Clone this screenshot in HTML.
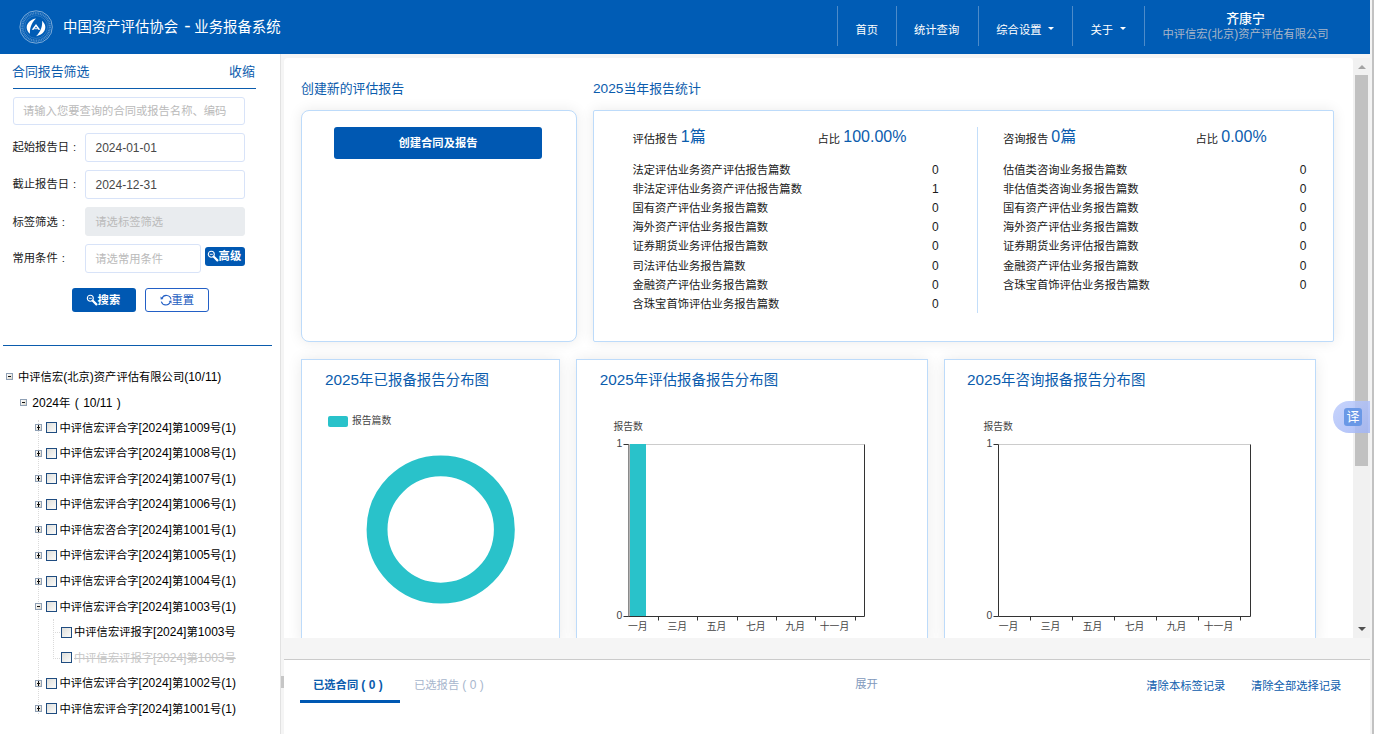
<!DOCTYPE html>
<html lang="zh-CN">
<head>
<meta charset="utf-8">
<title>中国资产评估协会 - 业务报备系统</title>
<style>
*{box-sizing:border-box;margin:0;padding:0}
html,body{width:1374px;height:734px;overflow:hidden;background:#f5f5f5}
body{position:relative;font-family:"Liberation Sans","Noto Sans CJK SC",sans-serif;font-size:11.3px;color:#111;line-height:1}
.a{position:absolute;white-space:nowrap}
.t{position:absolute;white-space:nowrap;height:20px;line-height:20px}
.l{font-size:1.062em}
.inp{border:1px solid #d8e3f8;border-radius:3px;background:#fff}
.cb{width:11px;height:11px;border:1px solid #1f4c80;background:linear-gradient(135deg,#dededa,#f6f6f4 80%)}
.pm{width:7px;height:7px;border:1px solid #8fa0b5;background:linear-gradient(135deg,#fff,#dcd8cc)}
.pm:before{content:"";position:absolute;left:1px;top:2px;width:3px;height:1px;background:#111}
.pm.p:after{content:"";position:absolute;left:2px;top:0;width:1px;height:5px;background:#111}
.card{border:1px solid #bddbfa;background:#fff;box-shadow:0 0 14px rgba(0,0,0,.085)}
</style>
</head>
<body>

<div class="a" style="left:0px;top:0px;width:1370px;height:54px;background:#005cb5"></div>
<div class="a" style="left:1370px;top:0px;width:2px;height:734px;background:#f4f4f4"></div>
<div class="a" style="left:1372px;top:0px;width:2px;height:734px;background:#c2c2c2"></div>
<svg class="a" style="left:18.5px;top:9.5px" width="34" height="34" viewBox="0 0 34 34">
  <circle cx="17.1" cy="17" r="16.2" fill="none" stroke="#fff" stroke-opacity=".55" stroke-width="0.9"/>
  <circle cx="17.1" cy="17" r="13.7" fill="none" stroke="#fff" stroke-opacity=".3" stroke-width="2.4" stroke-dasharray="1 0.7"/>
  <circle cx="17.1" cy="17" r="11.4" fill="none" stroke="#fff" stroke-opacity=".28" stroke-width="0.6"/>
  <path d="M17 8.4 C8.5 10 4.5 17.5 11 23.8 C10.5 18.5 12.3 13 17 8.4Z" fill="#fff"/>
  <path d="M17.1 26.2 C25.6 24.6 29.6 17.1 23.1 10.8 C23.6 16.1 21.8 21.6 17.1 26.2Z" fill="#fff"/>
  <path d="M17 13.9 L21.3 19.8 H19.2 L17 16.6 L14.8 19.8 H12.7 Z" fill="#fff"/>
  <path d="M15.5 18.7H18.5" stroke="#fff" stroke-width="0.9"/>
</svg>

<div class="t" style="left:63px;top:16.6px;font-size:14.4px;color:#fff;">中国资产评估协会<span class="nl" style="font-size:19px;line-height:0;margin:0 3.6px 0 6.2px">-</span>业务报备系统</div>
<div class="a" style="left:837px;top:6px;width:1px;height:40px;background:#4d8bc9"></div>
<div class="a" style="left:896px;top:6px;width:1px;height:40px;background:#4d8bc9"></div>
<div class="a" style="left:978px;top:6px;width:1px;height:40px;background:#4d8bc9"></div>
<div class="a" style="left:1072px;top:6px;width:1px;height:40px;background:#4d8bc9"></div>
<div class="a" style="left:1144px;top:6px;width:1px;height:40px;background:#4d8bc9"></div>
<div class="t" style="left:855.5px;top:19.8px;font-size:11.3px;color:#fff;">首页</div>
<div class="t" style="left:914px;top:19.8px;font-size:11.3px;color:#fff;">统计查询</div>
<div class="t" style="left:996.3px;top:19.8px;font-size:11.3px;color:#fff;">综合设置</div>
<div class="t" style="left:1090.5px;top:19.8px;font-size:11.3px;color:#fff;">关于</div>
<div class="a" style="left:1048px;top:27px;width:0px;height:0px;border:3px solid transparent;border-top:3px solid #fff;border-bottom:0"></div>
<div class="a" style="left:1120px;top:27px;width:0px;height:0px;border:3px solid transparent;border-top:3px solid #fff;border-bottom:0"></div>
<div class="t" style="left:1145.5px;top:9.2px;font-size:12.9px;color:#fff;width:200px;text-align:center;font-weight:500">齐康宁</div>
<div class="t" style="left:1145.5px;top:23.7px;font-size:11.3px;color:#a9b6c8;width:200px;text-align:center;">中评信宏<span class="l">(</span>北京<span class="l">)</span>资产评估有限公司</div>
<div class="a" style="left:0px;top:54px;width:280px;height:680px;background:#fff"></div>
<div class="a" style="left:280px;top:54px;width:1px;height:680px;background:#e2e2e2"></div>
<div class="t" style="left:12px;top:62px;font-size:12.9px;color:#0b5cad;">合同报告筛选</div>
<div class="t" style="left:229px;top:62px;font-size:12.9px;color:#0b5cad;">收缩</div>
<div class="a" style="left:13px;top:88px;width:243px;height:1px;background:#0b5cad"></div>
<div class="a inp" style="left:13px;top:97px;width:232px;height:28px"></div>
<div class="t" style="left:23px;top:101px;font-size:11.3px;color:#bababa;">请输入您要查询的合同或报告名称、编码</div>
<div class="t" style="left:12.5px;top:137.2px;font-size:11.3px;color:#1a1a1a;">起始报告日<span style="margin-left:4px">:</span></div>
<div class="t" style="left:12.5px;top:174.4px;font-size:11.3px;color:#1a1a1a;">截止报告日<span style="margin-left:4px">:</span></div>
<div class="t" style="left:12.5px;top:211.8px;font-size:11.3px;color:#1a1a1a;">标签筛选<span style="margin-left:4px">:</span></div>
<div class="t" style="left:12.5px;top:248.4px;font-size:11.3px;color:#1a1a1a;">常用条件<span style="margin-left:4px">:</span></div>
<div class="a inp" style="left:85px;top:133px;width:160px;height:29px"></div>
<div class="t" style="left:95.5px;top:138px;font-size:11.3px;color:#484848;"><span class="l">2024-01-01</span></div>
<div class="a inp" style="left:85px;top:170px;width:160px;height:29px"></div>
<div class="t" style="left:95.5px;top:175px;font-size:11.3px;color:#484848;"><span class="l">2024-12-31</span></div>
<div class="a inp" style="left:85px;top:207px;width:160px;height:29px;background:#e9ecef;border-color:#e9ecef"></div>
<div class="t" style="left:95.3px;top:212px;font-size:11.3px;color:#bababa;">请选标签筛选</div>
<div class="a inp" style="left:85px;top:244px;width:116px;height:29px"></div>
<div class="t" style="left:95.3px;top:249px;font-size:11.3px;color:#bababa;">请选常用条件</div>
<div class="a" style="left:205px;top:247px;width:40px;height:19px;background:#0058b2;border-radius:3px"></div>
<svg class="a" style="left:207px;top:250.3px" width="12" height="12" viewBox="0 0 12 12"><circle cx="4.3" cy="4.3" r="3" fill="none" stroke="#fff" stroke-width="1.1"/><path d="M6.8 6.8 L10.4 10.4" stroke="#fff" stroke-width="2.2" stroke-linecap="round"/><path d="M2.8 4.3H5.8" stroke="#fff" stroke-width="0.9"/></svg>
<div class="t" style="left:218.6px;top:245.7px;font-size:11.3px;color:#fff;font-weight:bold">高级</div>
<div class="a" style="left:72px;top:288px;width:64px;height:24px;background:#0058b2;border-radius:3px"></div>
<svg class="a" style="left:86px;top:294px" width="12" height="12" viewBox="0 0 12 12"><circle cx="4.3" cy="4.3" r="3" fill="none" stroke="#fff" stroke-width="1.1"/><path d="M6.8 6.8 L10.4 10.4" stroke="#fff" stroke-width="2.2" stroke-linecap="round"/><path d="M2.8 4.3H5.8" stroke="#fff" stroke-width="0.9"/></svg>
<div class="t" style="left:97.6px;top:290px;font-size:11.3px;color:#fff;font-weight:bold">搜索</div>
<div class="a" style="left:145px;top:288px;width:64px;height:24px;background:#fff;border:1px solid #2360c6;border-radius:3px"></div>
<svg class="a" style="left:160.4px;top:293.5px" width="12" height="12" viewBox="0 0 12 12"><path d="M2 4.4A4.7 4.7 0 0 1 11 5.3M1.3 7.6A4.8 4.8 0 0 0 10.2 8.2" fill="none" stroke="#2360c6" stroke-width="1.1"/><path d="M0.5 2.4L0.7 5.6L3.5 4.9ZM11.6 9.6L11.4 6.4L8.6 7.1Z" fill="#2360c6"/></svg>
<div class="t" style="left:171.5px;top:290px;font-size:11.3px;color:#1a5cc0;">重置</div>
<div class="a" style="left:3px;top:345px;width:269px;height:1px;background:#0b5cad"></div>
<div class="a" style="left:38px;top:420px;width:0px;height:294px;border-left:1px dotted #dadada"></div>
<div class="a pm" style="left:6px;top:373.1px"></div>
<div class="t" style="left:18px;top:366.5px;font-size:11.3px;color:#000;">中评信宏<span class="l">(</span>北京<span class="l">)</span>资产评估有限公司<span class="l">(10/11)</span></div>
<div class="a pm" style="left:20px;top:398.7px"></div>
<div class="t" style="left:32.3px;top:392.7px;font-size:11.3px;color:#000;word-spacing:1.2px"><span class="l">2024</span>年 <span class="l">( 10/11 )</span></div>
<div class="a pm p" style="left:35px;top:424.2px"></div>
<div class="a cb" style="left:46px;top:422.2px"></div>
<div class="t" style="left:59.5px;top:417.6px;font-size:11.3px;color:#000;">中评信宏评合字<span class="l">[2024]</span>第<span class="l">1009</span>号<span class="l">(1)</span></div>
<div class="a pm p" style="left:35px;top:449.7px"></div>
<div class="a cb" style="left:46px;top:447.7px"></div>
<div class="t" style="left:59.5px;top:443.1px;font-size:11.3px;color:#000;">中评信宏评合字<span class="l">[2024]</span>第<span class="l">1008</span>号<span class="l">(1)</span></div>
<div class="a pm p" style="left:35px;top:475.3px"></div>
<div class="a cb" style="left:46px;top:473.3px"></div>
<div class="t" style="left:59.5px;top:468.7px;font-size:11.3px;color:#000;">中评信宏评合字<span class="l">[2024]</span>第<span class="l">1007</span>号<span class="l">(1)</span></div>
<div class="a pm p" style="left:35px;top:500.9px"></div>
<div class="a cb" style="left:46px;top:498.9px"></div>
<div class="t" style="left:59.5px;top:494.3px;font-size:11.3px;color:#000;">中评信宏评合字<span class="l">[2024]</span>第<span class="l">1006</span>号<span class="l">(1)</span></div>
<div class="a pm p" style="left:35px;top:526.4px"></div>
<div class="a cb" style="left:46px;top:524.4px"></div>
<div class="t" style="left:59.5px;top:519.8px;font-size:11.3px;color:#000;">中评信宏咨合字<span class="l">[2024]</span>第<span class="l">1001</span>号<span class="l">(1)</span></div>
<div class="a pm p" style="left:35px;top:552.0px"></div>
<div class="a cb" style="left:46px;top:550.0px"></div>
<div class="t" style="left:59.5px;top:545.4px;font-size:11.3px;color:#000;">中评信宏评合字<span class="l">[2024]</span>第<span class="l">1005</span>号<span class="l">(1)</span></div>
<div class="a pm p" style="left:35px;top:577.5px"></div>
<div class="a cb" style="left:46px;top:575.5px"></div>
<div class="t" style="left:59.5px;top:570.9px;font-size:11.3px;color:#000;">中评信宏评合字<span class="l">[2024]</span>第<span class="l">1004</span>号<span class="l">(1)</span></div>
<div class="a pm" style="left:35px;top:603.1px"></div>
<div class="a cb" style="left:46px;top:601.1px"></div>
<div class="t" style="left:59.5px;top:596.5px;font-size:11.3px;color:#000;">中评信宏评合字<span class="l">[2024]</span>第<span class="l">1003</span>号<span class="l">(1)</span></div>
<div class="a" style="left:53px;top:619px;width:0px;height:40px;border-left:1px dotted #dadada"></div>
<div class="a" style="left:53px;top:632px;width:7px;height:0px;border-top:1px dotted #dadada"></div>
<div class="a" style="left:53px;top:658px;width:7px;height:0px;border-top:1px dotted #dadada"></div>
<div class="a cb" style="left:61px;top:626.6px"></div>
<div class="t" style="left:74px;top:622.0px;font-size:11.3px;color:#000;">中评信宏评报字<span class="l">[2024]</span>第<span class="l">1003</span>号</div>
<div class="a cb" style="left:61px;top:652.2px"></div>
<div class="t" style="left:74px;top:647.6px;font-size:11.3px;color:#c6c6c6;text-decoration:line-through">中评信宏评报字<span class="l">[2024]</span>第<span class="l">1003</span>号</div>
<div class="a pm p" style="left:35px;top:679.7px"></div>
<div class="a cb" style="left:46px;top:677.7px"></div>
<div class="t" style="left:59.5px;top:673.1px;font-size:11.3px;color:#000;">中评信宏评合字<span class="l">[2024]</span>第<span class="l">1002</span>号<span class="l">(1)</span></div>
<div class="a pm p" style="left:35px;top:705.3px"></div>
<div class="a cb" style="left:46px;top:703.3px"></div>
<div class="t" style="left:59.5px;top:698.7px;font-size:11.3px;color:#000;">中评信宏评合字<span class="l">[2024]</span>第<span class="l">1001</span>号<span class="l">(1)</span></div>
<div class="a" style="left:284px;top:58px;width:1069px;height:580px;background:#fff;border-radius:4px 4px 0 0"></div>
<div class="a" style="left:281px;top:676px;width:3px;height:12px;background:#c6c6c6"></div>
<div class="a" style="left:1353px;top:58px;width:17px;height:580px;background:#f1f1f1"></div>
<div class="a" style="left:1355px;top:75px;width:13px;height:391px;background:#c1c1c1"></div>
<div class="a" style="left:1357.5px;top:64.5px;width:0px;height:0px;border:4px solid transparent;border-top:0;border-bottom:4.5px solid #a3a3a3"></div>
<div class="a" style="left:1357.5px;top:626.8px;width:0px;height:0px;border:4px solid transparent;border-bottom:0;border-top:4.5px solid #505050"></div>
<div class="t" style="left:301px;top:79px;font-size:12.9px;color:#0b5cad;">创建新的评估报告</div>
<div class="a card" style="left:301px;top:110px;width:276px;height:232px;border-radius:8px"></div>
<div class="a" style="left:334px;top:127px;width:208px;height:32px;background:#0058b2;border-radius:3px"></div>
<div class="t" style="left:338.0px;top:133px;font-size:11.3px;color:#fff;width:200px;text-align:center;font-weight:bold">创建合同及报告</div>
<div class="t" style="left:593px;top:79px;font-size:12.9px;color:#0b5cad;"><span class="l">2025</span>当年报告统计</div>
<div class="a card" style="left:593px;top:110px;width:741px;height:232px;border-radius:2px"></div>
<div class="a" style="left:977px;top:127px;width:1px;height:186px;background:#c3defa"></div>
<div class="t" style="left:632.5px;top:128.3px;font-size:11.3px;color:#1a1a1a;">评估报告 <span class="nl" style="font-size:16px;color:#0b5cad;position:relative;top:-1px">1篇</span></div>
<div class="t" style="left:817.5px;top:128.3px;font-size:11.3px;color:#1a1a1a;">占比 <span class="nl" style="font-size:16px;color:#0b5cad;position:relative;top:-1px">100.00%</span></div>
<div class="t" style="left:1003px;top:128.3px;font-size:11.3px;color:#1a1a1a;">咨询报告 <span class="nl" style="font-size:16px;color:#0b5cad;position:relative;top:-1px">0篇</span></div>
<div class="t" style="left:1195.5px;top:128.3px;font-size:11.3px;color:#1a1a1a;">占比 <span class="nl" style="font-size:16px;color:#0b5cad;position:relative;top:-1px">0.00%</span></div>
<div class="t" style="left:632.5px;top:159.6px;font-size:11.3px;color:#1a1a1a;">法定评估业务资产评估报告篇数</div>
<div class="t" style="left:925.3px;top:159.6px;font-size:11.3px;color:#1a1a1a;width:20px;text-align:center;"><span class="l">0</span></div>
<div class="t" style="left:632.5px;top:178.8px;font-size:11.3px;color:#1a1a1a;">非法定评估业务资产评估报告篇数</div>
<div class="t" style="left:925.3px;top:178.8px;font-size:11.3px;color:#1a1a1a;width:20px;text-align:center;"><span class="l">1</span></div>
<div class="t" style="left:632.5px;top:198px;font-size:11.3px;color:#1a1a1a;">国有资产评估业务报告篇数</div>
<div class="t" style="left:925.3px;top:198px;font-size:11.3px;color:#1a1a1a;width:20px;text-align:center;"><span class="l">0</span></div>
<div class="t" style="left:632.5px;top:217.2px;font-size:11.3px;color:#1a1a1a;">海外资产评估业务报告篇数</div>
<div class="t" style="left:925.3px;top:217.2px;font-size:11.3px;color:#1a1a1a;width:20px;text-align:center;"><span class="l">0</span></div>
<div class="t" style="left:632.5px;top:236.4px;font-size:11.3px;color:#1a1a1a;">证券期货业务评估报告篇数</div>
<div class="t" style="left:925.3px;top:236.4px;font-size:11.3px;color:#1a1a1a;width:20px;text-align:center;"><span class="l">0</span></div>
<div class="t" style="left:632.5px;top:255.6px;font-size:11.3px;color:#1a1a1a;">司法评估业务报告篇数</div>
<div class="t" style="left:925.3px;top:255.6px;font-size:11.3px;color:#1a1a1a;width:20px;text-align:center;"><span class="l">0</span></div>
<div class="t" style="left:632.5px;top:274.8px;font-size:11.3px;color:#1a1a1a;">金融资产评估业务报告篇数</div>
<div class="t" style="left:925.3px;top:274.8px;font-size:11.3px;color:#1a1a1a;width:20px;text-align:center;"><span class="l">0</span></div>
<div class="t" style="left:632.5px;top:294px;font-size:11.3px;color:#1a1a1a;">含珠宝首饰评估业务报告篇数</div>
<div class="t" style="left:925.3px;top:294px;font-size:11.3px;color:#1a1a1a;width:20px;text-align:center;"><span class="l">0</span></div>
<div class="t" style="left:1003px;top:159.6px;font-size:11.3px;color:#1a1a1a;">估值类咨询业务报告篇数</div>
<div class="t" style="left:1293.2px;top:159.6px;font-size:11.3px;color:#1a1a1a;width:20px;text-align:center;"><span class="l">0</span></div>
<div class="t" style="left:1003px;top:178.8px;font-size:11.3px;color:#1a1a1a;">非估值类咨询业务报告篇数</div>
<div class="t" style="left:1293.2px;top:178.8px;font-size:11.3px;color:#1a1a1a;width:20px;text-align:center;"><span class="l">0</span></div>
<div class="t" style="left:1003px;top:198px;font-size:11.3px;color:#1a1a1a;">国有资产评估业务报告篇数</div>
<div class="t" style="left:1293.2px;top:198px;font-size:11.3px;color:#1a1a1a;width:20px;text-align:center;"><span class="l">0</span></div>
<div class="t" style="left:1003px;top:217.2px;font-size:11.3px;color:#1a1a1a;">海外资产评估业务报告篇数</div>
<div class="t" style="left:1293.2px;top:217.2px;font-size:11.3px;color:#1a1a1a;width:20px;text-align:center;"><span class="l">0</span></div>
<div class="t" style="left:1003px;top:236.4px;font-size:11.3px;color:#1a1a1a;">证券期货业务评估报告篇数</div>
<div class="t" style="left:1293.2px;top:236.4px;font-size:11.3px;color:#1a1a1a;width:20px;text-align:center;"><span class="l">0</span></div>
<div class="t" style="left:1003px;top:255.6px;font-size:11.3px;color:#1a1a1a;">金融资产评估业务报告篇数</div>
<div class="t" style="left:1293.2px;top:255.6px;font-size:11.3px;color:#1a1a1a;width:20px;text-align:center;"><span class="l">0</span></div>
<div class="t" style="left:1003px;top:274.8px;font-size:11.3px;color:#1a1a1a;">含珠宝首饰评估业务报告篇数</div>
<div class="t" style="left:1293.2px;top:274.8px;font-size:11.3px;color:#1a1a1a;width:20px;text-align:center;"><span class="l">0</span></div>
<div class="a card" style="left:301px;top:359px;width:259px;height:285px;border-bottom:0"></div>
<div class="a card" style="left:576px;top:359px;width:352px;height:285px;border-bottom:0"></div>
<div class="a card" style="left:944px;top:359px;width:372px;height:285px;border-bottom:0"></div>
<div class="t" style="left:325px;top:369.6px;font-size:14.45px;color:#0b5cad;"><span class="l">2025</span>年已报备报告分布图</div>
<div class="t" style="left:599.7px;top:369.6px;font-size:14.45px;color:#0b5cad;"><span class="l">2025</span>年评估报备报告分布图</div>
<div class="t" style="left:967px;top:369.6px;font-size:14.45px;color:#0b5cad;"><span class="l">2025</span>年咨询报备报告分布图</div>
<div class="a" style="left:328px;top:416px;width:20px;height:11px;background:#29c2ca;border-radius:2px"></div>
<div class="t" style="left:352px;top:411px;font-size:9.8px;color:#444;">报告篇数</div>
<svg class="a" style="left:360px;top:449px" width="162" height="162" viewBox="0 0 162 162"><circle cx="80.7" cy="80.5" r="63.65" fill="none" stroke="#29c2ca" stroke-width="20.9"/></svg>
<div class="t" style="left:613.5px;top:417.2px;font-size:9.8px;color:#444;">报告数</div>
<div class="t" style="left:616.5px;top:434px;font-size:9.8px;color:#444;"><span class="l">1</span></div>
<div class="t" style="left:616.5px;top:605.8px;font-size:9.8px;color:#444;"><span class="l">0</span></div>
<svg class="a" style="left:618px;top:438px" width="256" height="186" viewBox="0 0 256 186"><path d="M10.5 6.5H246.5" stroke="#ccc" fill="none"/><path d="M5.5 6.5H10.5V178.5H246.5V6.5" stroke="#333" fill="none"/><path d="M5.5 178.5H10.5" stroke="#333" fill="none"/><rect x="12" y="6" width="16" height="172" fill="#29c2ca"/><path d="M11.5 7V178" stroke="#b4b4b4"/><path d="M10.5 7V178" stroke="#8a8a8a"/><path d="M40.5 178.5v4M79.5 178.5v4M119.5 178.5v4M158.5 178.5v4M197.5 178.5v4M237.5 178.5v4" stroke="#333" fill="none"/></svg>
<div class="t" style="left:617.8px;top:616.9px;font-size:9.8px;color:#444;width:40px;text-align:center;">一月</div>
<div class="t" style="left:657.2px;top:616.9px;font-size:9.8px;color:#444;width:40px;text-align:center;">三月</div>
<div class="t" style="left:696.5px;top:616.9px;font-size:9.8px;color:#444;width:40px;text-align:center;">五月</div>
<div class="t" style="left:735.8px;top:616.9px;font-size:9.8px;color:#444;width:40px;text-align:center;">七月</div>
<div class="t" style="left:775.2px;top:616.9px;font-size:9.8px;color:#444;width:40px;text-align:center;">九月</div>
<div class="t" style="left:814.5px;top:616.9px;font-size:9.8px;color:#444;width:40px;text-align:center;">十一月</div>
<div class="t" style="left:983.5px;top:417.2px;font-size:9.8px;color:#444;">报告数</div>
<div class="t" style="left:986.5px;top:434px;font-size:9.8px;color:#444;"><span class="l">1</span></div>
<div class="t" style="left:986.5px;top:605.8px;font-size:9.8px;color:#444;"><span class="l">0</span></div>
<svg class="a" style="left:988px;top:438px" width="272" height="186" viewBox="0 0 272 186"><path d="M10.5 6.5H262.5" stroke="#ccc" fill="none"/><path d="M5.5 6.5H10.5V178.5H262.5V6.5" stroke="#333" fill="none"/><path d="M5.5 178.5H10.5" stroke="#333" fill="none"/><path d="M42.5 178.5v4M84.5 178.5v4M126.5 178.5v4M168.5 178.5v4M210.5 178.5v4M252.5 178.5v4" stroke="#333" fill="none"/></svg>
<div class="t" style="left:988.5px;top:616.9px;font-size:9.8px;color:#444;width:40px;text-align:center;">一月</div>
<div class="t" style="left:1030.5px;top:616.9px;font-size:9.8px;color:#444;width:40px;text-align:center;">三月</div>
<div class="t" style="left:1072.5px;top:616.9px;font-size:9.8px;color:#444;width:40px;text-align:center;">五月</div>
<div class="t" style="left:1114.5px;top:616.9px;font-size:9.8px;color:#444;width:40px;text-align:center;">七月</div>
<div class="t" style="left:1156.5px;top:616.9px;font-size:9.8px;color:#444;width:40px;text-align:center;">九月</div>
<div class="t" style="left:1198.5px;top:616.9px;font-size:9.8px;color:#444;width:40px;text-align:center;">十一月</div>
<div class="a" style="left:282px;top:638px;width:1088px;height:21px;background:#f5f5f5"></div>
<div class="a" style="left:284px;top:659px;width:1086px;height:75px;background:#fff;border-top:1px solid #cbcbcb"></div>
<div class="t" style="left:313px;top:675.1px;font-size:11.3px;color:#0b5cad;font-weight:bold">已选合同 <span class="l">( 0 )</span></div>
<div class="a" style="left:300px;top:700px;width:100px;height:3px;background:#0058b2"></div>
<div class="t" style="left:414px;top:675.1px;font-size:11.3px;color:#a7b6cd;">已选报告 <span class="l">( 0 )</span></div>
<div class="t" style="left:855.3px;top:674.3px;font-size:11.3px;color:#8199bc;">展开</div>
<div class="t" style="left:1146.3px;top:675.6px;font-size:11.3px;color:#0b5cad;">清除本标签记录</div>
<div class="t" style="left:1251px;top:675.6px;font-size:11.3px;color:#0b5cad;">清除全部选择记录</div>
<div class="a" style="left:1333px;top:401px;width:37px;height:32px;border-radius:16px 0 0 16px;background:linear-gradient(135deg,rgba(190,205,252,.85),rgba(160,180,245,.85))"></div>
<div class="a" style="left:1344px;top:408px;width:18px;height:18px;border-radius:3px;background:#6a98e6;color:#fff;font-size:13px;line-height:17px;text-align:center">译</div>
</body>
</html>
